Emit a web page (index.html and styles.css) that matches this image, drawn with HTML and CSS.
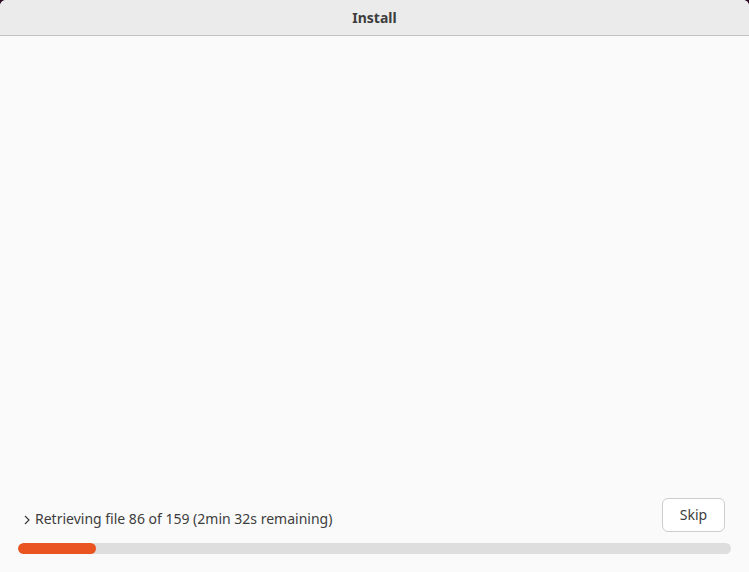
FILE: index.html
```html
<!DOCTYPE html>
<html lang="en">
<head>
<meta charset="utf-8">
<title>Install</title>
<link rel="stylesheet" href="styles.css">
</head>
<body>
<div class="window">
  <header class="titlebar"><span class="title">Install</span></header>
  <main class="content"></main>
  <footer class="footer">
    <div class="status-row">
      <div class="status">
        <svg class="chevron" width="6" height="10" viewBox="0 0 6 10"><path d="M1 1 L5 5 L1 9" fill="none" stroke="#3d3d3d" stroke-width="1.2"/></svg>
        <span class="status-text">Retrieving file 86 of 159 (2min 32s remaining)</span>
      </div>
      <button class="skip">Skip</button>
    </div>
    <div class="progress"><div class="progress-fill" style="width:11%"></div></div>
  </footer>
</div>
</body>
</html>
```

FILE: styles.css
```css
html, body {
  margin: 0;
  padding: 0;
  background: #2c0a23;
}
.window {
  width: 749px;
  height: 572px;
  display: flex;
  flex-direction: column;
  background: #fafafa;
  border-radius: 6px 6px 0 0;
  overflow: hidden;
  font-family: "Noto Sans", "DejaVu Sans", sans-serif;
  color: #3d3d3d;
}
.titlebar {
  height: 35px;
  flex: none;
  background: #ebebeb;
  border-bottom: 1px solid #c2c2c2;
  display: flex;
  align-items: center;
  justify-content: center;
}
.title {
  font-weight: bold;
  font-size: 14px;
  color: #3d3d3d;
}
.content {
  flex: 1;
}
.footer {
  padding: 0 18px 18px 18px;
  display: flex;
  flex-direction: column;
}
.status-row {
  display: flex;
  align-items: flex-end;
  justify-content: space-between;
  padding-right: 6px;
}
.status {
  display: flex;
  align-items: center;
  gap: 5px;
  padding-left: 6px;
  padding-bottom: 4px;
  font-size: 14px;
}
.chevron {
  margin-top: 3px;
}
.skip {
  width: 63px;
  height: 34px;
  border: 1px solid #cdcdcd;
  border-radius: 6px;
  background: #ffffff;
  font-family: inherit;
  font-size: 14px;
  color: #3d3d3d;
  padding: 0 0 2px 0;
}
.progress {
  margin-top: 11px;
  height: 11px;
  border-radius: 6px;
  background: #dedede;
  overflow: hidden;
}
.progress-fill {
  height: 100%;
  background: #e95420;
  border-radius: 6px;
}
```
